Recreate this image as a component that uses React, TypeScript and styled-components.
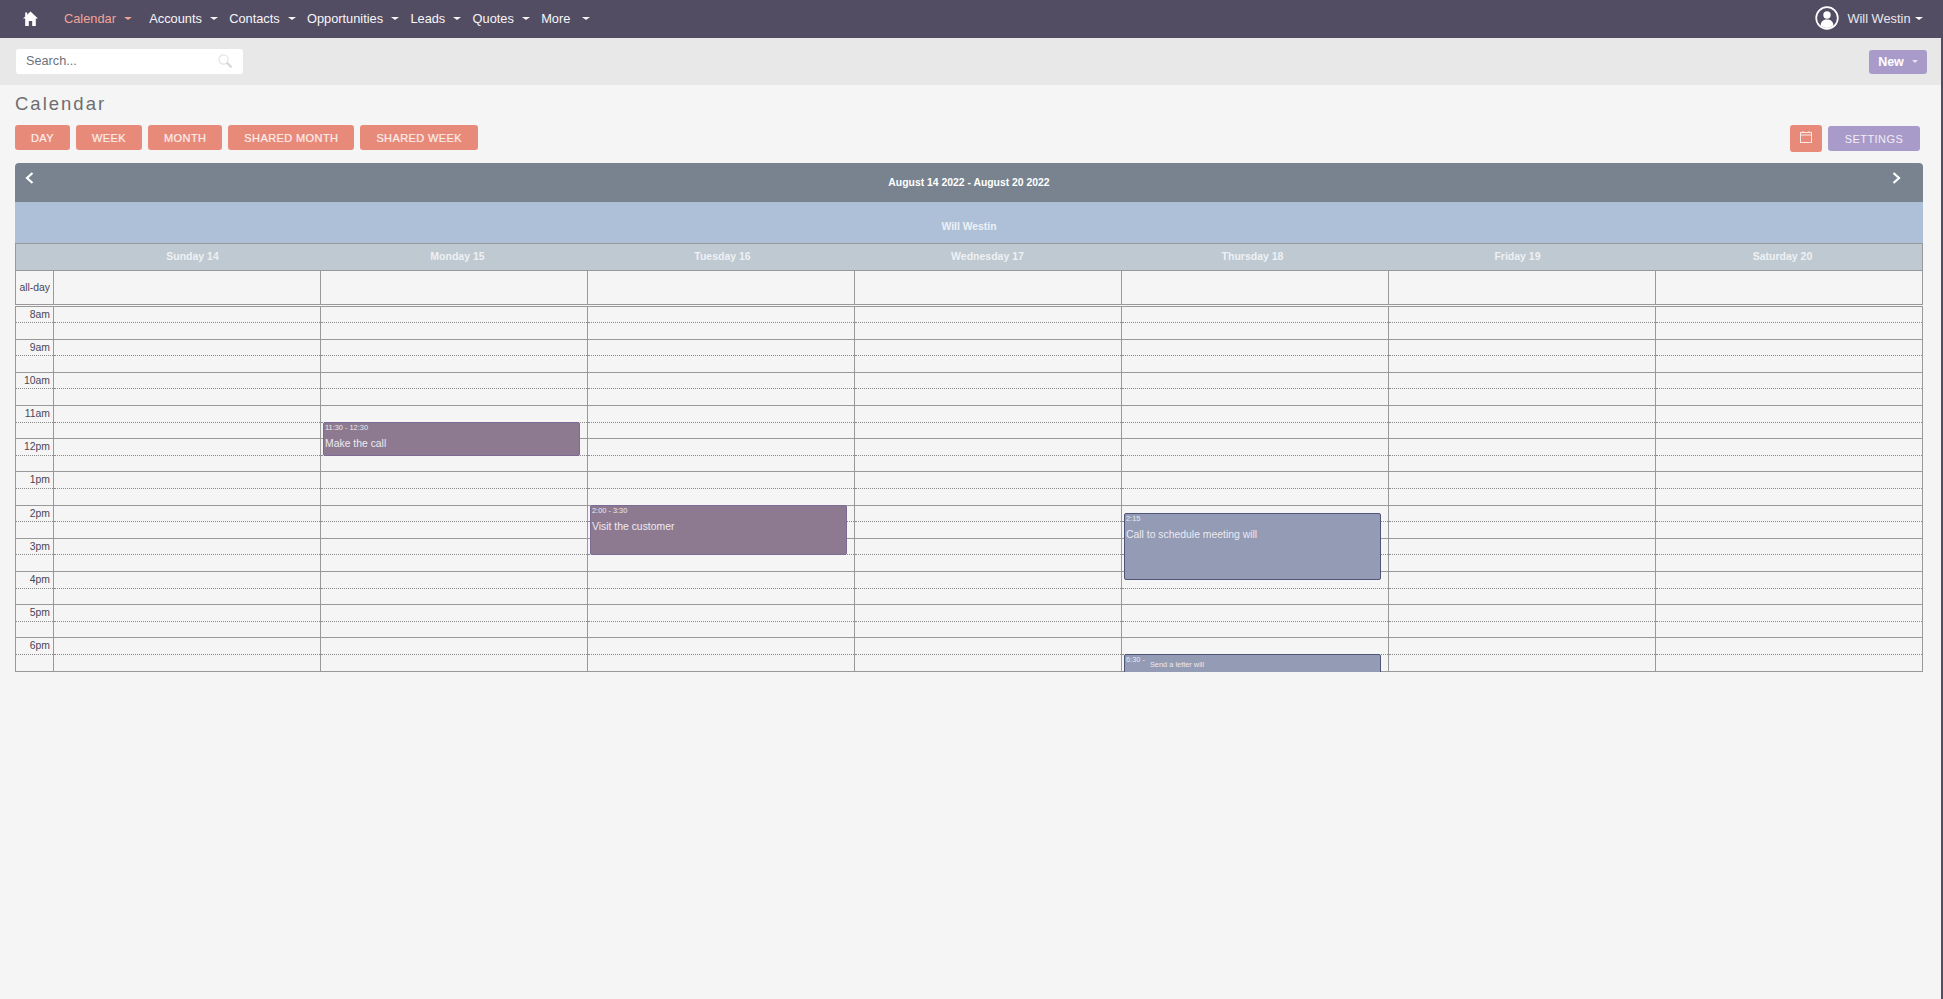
import styled, { createGlobalStyle } from 'styled-components';

const GlobalStyle = createGlobalStyle`
  html, body {
    margin: 0;
    padding: 0;
    background: #534d64;
  }
  * {
    box-sizing: border-box;
  }
`;

const Page = styled.div`
  width: calc(100vw - 2px);
  min-height: 100vh;
  background: #f5f5f5;
  font-family: 'Liberation Sans', Arial, sans-serif;
`;

const TopNav = styled.nav`
  height: 38px;
  width: 100vw;
  background: #534d64;
  display: flex;
  align-items: center;
  padding: 0 20.5px 2px 23px;
  color: #fff;
`;

const HomeLink = styled.a`
  display: flex;
  width: 15px;
  margin-right: 26px;
`;

const MenuItem = styled.a<{ $active?: boolean; $caretGap?: number; $after?: number }>`
  display: flex;
  align-items: center;
  font-size: 12.8px;
  color: ${({ $active }) => ($active ? '#f0a597' : '#f7f6f8')};
  margin-right: ${({ $after }) => $after ?? 11.3}px;

  &::after {
    content: '';
    margin-left: ${({ $caretGap }) => $caretGap ?? 8}px;
    margin-top: 1px;
    border-top: 3.5px solid currentColor;
    border-left: 4px solid transparent;
    border-right: 4px solid transparent;
  }
`;

const UserMenu = styled.a`
  margin-left: auto;
  display: flex;
  align-items: center;
  font-size: 12.8px;
  color: #e9e8ec;

  svg {
    margin-right: 8px;
  }

  &::after {
    content: '';
    margin-left: 4px;
    border-top: 3.5px solid #fff;
    border-left: 4px solid transparent;
    border-right: 4px solid transparent;
  }
`;

const SearchBar = styled.div`
  height: 47px;
  background: #e8e8e8;
  display: flex;
  align-items: center;
  justify-content: space-between;
  padding: 0 14px 0 16px;
`;

const SearchBox = styled.div`
  width: 227px;
  height: 25px;
  margin-top: -1px;
  border-radius: 3px;
  background: #fff;
  display: flex;
  align-items: center;
  justify-content: space-between;
  padding: 0 11px 0 10px;
  font-size: 12.7px;
  color: #6b7280;
`;

const NewButton = styled.button`
  width: 58px;
  height: 24px;
  border: 0;
  border-radius: 3px;
  background: #a99bc9;
  color: #fff;
  font: bold 12.5px 'Liberation Sans', Arial, sans-serif;
  display: flex;
  align-items: center;
  justify-content: center;
  gap: 8px;

  &::after {
    content: '';
    border-top: 3px solid #e6e1f0;
    border-left: 3.5px solid transparent;
    border-right: 3.5px solid transparent;
  }
`;

const Content = styled.main`
  padding: 0 18px 0 15px;
`;

const PageTitle = styled.h1`
  margin: 0;
  height: 40px;
  padding-top: 8px;
  font-size: 18.5px;
  line-height: 22px;
  font-weight: 400;
  letter-spacing: 2px;
  color: #6e6e6e;
`;

const Toolbar = styled.div`
  display: flex;
  align-items: flex-start;
  margin-bottom: 11px;
`;

const ViewButton = styled.button`
  height: 25px;
  padding: 0 16px;
  margin-right: 6px;
  border: 0;
  border-radius: 3px;
  background: #e88a7a;
  color: #fbeeeb;
  font: 11px 'Liberation Sans', Arial, sans-serif;
  letter-spacing: 0.4px;
  text-transform: uppercase;
  -webkit-text-stroke: 0.2px #fbeeeb;
`;

const IconButton = styled.button`
  width: 32px;
  height: 27px;
  margin-left: auto;
  margin-right: 6px;
  border: 0;
  border-radius: 3px;
  background: #e88a7a;
  display: flex;
  align-items: flex-start;
  justify-content: center;
  padding: 6px 0 0;
`;

const SettingsButton = styled.button`
  width: 92px;
  height: 25px;
  margin: 1px 3px 0 0;
  border: 0;
  border-radius: 3px;
  background: #a99bc9;
  color: #f1eef7;
  font: 11px 'Liberation Sans', Arial, sans-serif;
  letter-spacing: 0.45px;
  text-transform: uppercase;
`;

const Calendar = styled.section`
  width: 1908px;
`;

const RangeBar = styled.div`
  height: 39px;
  border-radius: 4px 4px 0 0;
  background: #78838f;
  display: grid;
  grid-template-columns: 1fr auto 1fr;
  align-items: center;
  padding: 0 22px 1px 10px;
  color: #fff;
  font-size: 10.4px;
  font-weight: bold;
`;

const RangeLabel = styled.span`
  margin-left: 12px;
`;

const RangeArrow = styled.span<{ $end?: boolean }>`
  display: flex;
  justify-content: ${({ $end }) => ($end ? 'flex-end' : 'flex-start')};
  margin-top: -8px;
`;

const UserBar = styled.div`
  height: 41px;
  padding-top: 18px;
  background: #adc0d7;
  color: #edf1f6;
  font-size: 10.4px;
  font-weight: bold;
  line-height: 13px;
  text-align: center;
`;

const DayHeader = styled.div`
  height: 28px;
  border: 1px solid #999;
  background: #bfc9d2;
  padding: 0 7px 3px 44px;
  display: grid;
  grid-template-columns: repeat(7, 1fr);
  align-items: center;
  text-align: center;
  color: #eef1f4;
  font-size: 10.5px;
  font-weight: bold;
`;

const AllDayRow = styled.div`
  height: 33.5px;
  display: flex;
  border-left: 1px solid #999;
  border-bottom: 1px solid #999;
`;

const AllDayLabel = styled.div`
  flex: 0 0 38px;
  display: flex;
  align-items: center;
  justify-content: flex-end;
  padding-right: 3px;
  border-right: 1px solid #999;
  font-size: 10.4px;
  color: #4a4658;
`;

const AllDayCell = styled.div`
  flex: 1;
  border-right: 1px solid #999;
`;

const Grid = styled.div`
  margin-top: 1px;
  display: flex;
  border-top: 1px solid #999;
  border-left: 1px solid #999;
`;

const TimeColumn = styled.div`
  flex: 0 0 38px;
  border-right: 1px solid #999;
`;

const DayColumn = styled.div`
  flex: 1;
  position: relative;
  overflow: hidden;
  border-right: 1px solid #999;
`;

const Slot = styled.div<{ $half?: boolean }>`
  height: 16.6px;
  border-bottom: 1px ${({ $half }) => ($half ? 'solid #999' : 'dotted #8a8a8a')};
`;

const TimeSlot = styled(Slot)`
  padding-right: 3px;
  text-align: right;
  font-size: 10.4px;
  line-height: 15px;
  color: #4a4658;
`;

const EventBox = styled.div<{ $top: number; $height: number; $kind: 'meeting' | 'call' }>`
  position: absolute;
  top: ${({ $top }) => $top}px;
  height: ${({ $height }) => $height}px;
  left: 2px;
  right: 7px;
  padding: 1px 1px 0;
  border-radius: 2px;
  border: 1px solid ${({ $kind }) => ($kind === 'meeting' ? '#7c6b97' : '#4f5678')};
  background: ${({ $kind }) => ($kind === 'meeting' ? '#8d7a90' : '#939bb5')};
  color: #eceaf0;
  overflow: hidden;
`;

const EventTime = styled.div`
  font-size: 7.4px;
  line-height: 8px;
`;

const EventTitle = styled.div`
  margin-top: 5px;
  font-size: 10.4px;
  line-height: 13px;
`;

const EventInline = styled.div`
  display: flex;
  align-items: flex-start;
  gap: 5px;
`;

const SmallTitle = styled.span`
  margin-top: 4px;
  font-size: 7.4px;
  line-height: 9px;
`;

const HomeIcon = () => (
  <svg width="15" height="15" viewBox="0 0 15 15" fill="#fff">
    <path d="M7.5 0.5 L15 7.6 H12.8 V15 H9.2 V10 H5.8 V15 H2.2 V7.6 H0 L2.2 5.5 V1.5 H4.2 V3.7 Z" />
  </svg>
);

const SearchIcon = () => (
  <svg width="14" height="14" viewBox="0 0 14 14" fill="none">
    <circle cx="5.5" cy="5.5" r="4.6" stroke="#e3e3e3" strokeWidth="1.2" />
    <path d="M9.2 9.2 L12.8 12.6" stroke="#d8d8d8" strokeWidth="2.4" strokeLinecap="round" />
  </svg>
);

const UserIcon = () => (
  <svg width="24" height="24" viewBox="0 0 24 24">
    <circle cx="12" cy="12" r="10.8" fill="none" stroke="#fff" strokeWidth="1.7" />
    <circle cx="12" cy="9" r="3.7" fill="#fff" />
    <path d="M5.6 19.6 C5.8 15.4 8.4 13.6 12 13.6 C15.6 13.6 18.2 15.4 18.4 19.6 C16.6 21.2 14.4 22 12 22 C9.6 22 7.4 21.2 5.6 19.6 Z" fill="#fff" />
  </svg>
);

const CalendarIcon = () => (
  <svg width="12" height="12" viewBox="0 0 12 12" fill="none" stroke="#fbe9e5" strokeWidth="1">
    <rect x="0.5" y="1.5" width="11" height="10" />
    <path d="M0.5 4 H11.5 M3 0 V2 M9 0 V2" />
  </svg>
);

const Chevron = ({ flip }: { flip?: boolean }) => (
  <svg width="9" height="12" viewBox="0 0 9 12" fill="none" stroke="#fff" strokeWidth="2.2">
    <path d={flip ? 'M1.5 1 L7 6 L1.5 11' : 'M7.5 1 L2 6 L7.5 11'} />
  </svg>
);

const menu = [
  { label: 'Calendar', active: true, after: 17.3 },
  { label: 'Accounts' },
  { label: 'Contacts' },
  { label: 'Opportunities' },
  { label: 'Leads' },
  { label: 'Quotes' },
  { label: 'More', caretGap: 12 },
];

const views = ['Day', 'Week', 'Month', 'Shared Month', 'Shared Week'];
const days = ['Sunday 14', 'Monday 15', 'Tuesday 16', 'Wednesday 17', 'Thursday 18', 'Friday 19', 'Saturday 20'];
const hours = ['8am', '9am', '10am', '11am', '12pm', '1pm', '2pm', '3pm', '4pm', '5pm', '6pm'];

function Slots() {
  return (
    <>
      {hours.map((h) => (
        <div key={h}>
          <Slot />
          <Slot $half />
        </div>
      ))}
    </>
  );
}

function App() {
  return (
    <Page>
      <GlobalStyle />
      <TopNav>
        <HomeLink>
          <HomeIcon />
        </HomeLink>
        {menu.map((m) => (
          <MenuItem key={m.label} $active={m.active} $after={m.after} $caretGap={m.caretGap}>
            {m.label}
          </MenuItem>
        ))}
        <UserMenu>
          <UserIcon />
          Will Westin
        </UserMenu>
      </TopNav>

      <SearchBar>
        <SearchBox>
          Search...
          <SearchIcon />
        </SearchBox>
        <NewButton>New</NewButton>
      </SearchBar>

      <Content>
        <PageTitle>Calendar</PageTitle>
        <Toolbar>
          {views.map((v) => (
            <ViewButton key={v}>{v}</ViewButton>
          ))}
          <IconButton>
            <CalendarIcon />
          </IconButton>
          <SettingsButton>Settings</SettingsButton>
        </Toolbar>

        <Calendar>
          <RangeBar>
            <RangeArrow>
              <Chevron />
            </RangeArrow>
            <RangeLabel>August 14 2022 - August 20 2022</RangeLabel>
            <RangeArrow $end>
              <Chevron flip />
            </RangeArrow>
          </RangeBar>
          <UserBar>Will Westin</UserBar>
          <DayHeader>
            {days.map((d) => (
              <span key={d}>{d}</span>
            ))}
          </DayHeader>
          <AllDayRow>
            <AllDayLabel>all-day</AllDayLabel>
            {days.map((d) => (
              <AllDayCell key={d} />
            ))}
          </AllDayRow>
          <Grid>
            <TimeColumn>
              {hours.map((h) => (
                <div key={h}>
                  <TimeSlot>{h}</TimeSlot>
                  <Slot $half />
                </div>
              ))}
            </TimeColumn>
            {days.map((d) => (
              <DayColumn key={d}>
                <Slots />
                {d === 'Monday 15' && (
                  <EventBox $kind="meeting" $top={115} $height={34}>
                    <EventTime>11:30 - 12:30</EventTime>
                    <EventTitle>Make the call</EventTitle>
                  </EventBox>
                )}
                {d === 'Tuesday 16' && (
                  <EventBox $kind="meeting" $top={198} $height={50}>
                    <EventTime>2:00 - 3:30</EventTime>
                    <EventTitle>Visit the customer</EventTitle>
                  </EventBox>
                )}
                {d === 'Thursday 18' && (
                  <>
                    <EventBox $kind="call" $top={206} $height={67}>
                      <EventTime>2:15</EventTime>
                      <EventTitle>Call to schedule meeting will</EventTitle>
                    </EventBox>
                    <EventBox $kind="call" $top={347} $height={30}>
                      <EventInline>
                        <EventTime>6:30 -</EventTime>
                        <SmallTitle>Send a letter will</SmallTitle>
                      </EventInline>
                    </EventBox>
                  </>
                )}
              </DayColumn>
            ))}
          </Grid>
        </Calendar>
      </Content>
    </Page>
  );
}

export default App;
